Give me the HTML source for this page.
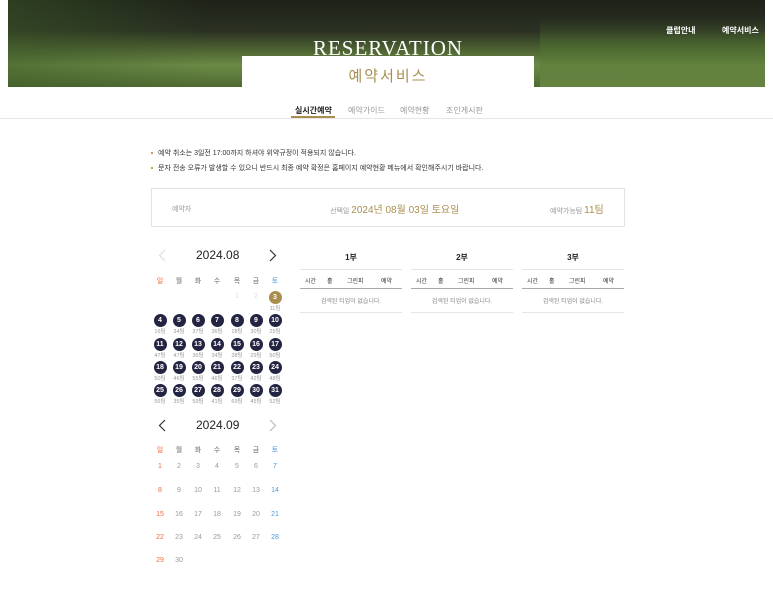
<!DOCTYPE html><html><head><meta charset="utf-8"><style>
*{margin:0;padding:0;box-sizing:border-box}
body{width:773px;height:614px;background:#fff;font-family:"Liberation Sans","Noto Sans CJK KR",sans-serif;position:relative;overflow:hidden;color:#333}
.a{position:absolute}
.ban{left:8px;top:0;width:757px;height:87px;background:linear-gradient(180deg,#1e2219 0%,#2a3022 35%,#4a5e30 55%,#6b8a45 75%,#4f6a32 100%)}
.c{position:absolute;width:13px;height:13px;border-radius:50%;background:#232342;color:#fff;font-size:7px;font-weight:bold;text-align:center;line-height:13px}
.n{position:absolute;font-size:5.5px;color:#999;width:24px;text-align:center}
.d{position:absolute;font-size:7px;color:#999;width:20px;text-align:center}
.h{position:absolute;font-size:7px;color:#666;width:20px;text-align:center}
.tb{position:absolute;width:102px;font-size:7px}
.bl{display:inline-block;width:2px;height:2px;background:#c9a24a;vertical-align:middle;margin-right:5px}
</style></head><body>
<div class="a ban"></div>
<div class="a" style="left:8px;top:0;width:200px;height:87px;background:linear-gradient(90deg,rgba(60,90,40,.5),rgba(0,0,0,0))"></div>
<div class="a" style="left:540px;top:0;width:225px;height:87px;background:linear-gradient(180deg,rgba(30,40,25,0) 20%,rgba(80,115,50,.6) 60%,rgba(110,140,70,.7))"></div>
<div class="a" style="left:242px;top:36px;width:292px;text-align:center;font-family:'Liberation Serif',serif;font-size:21px;color:#fff;letter-spacing:1px">RESERVATION</div>
<div class="a" style="left:242px;top:56px;width:292px;height:32px;background:#fff;text-align:center;font-size:15px;color:#a98f4f;line-height:42px;letter-spacing:2px">예약서비스</div>
<div class="a" style="left:666px;top:25px;font-size:8px;color:#fff;font-weight:bold">클럽안내</div>
<div class="a" style="left:722px;top:25px;font-size:8px;color:#fff;font-weight:bold">예약서비스</div>
<div class="a" style="left:0;top:118px;width:773px;height:1px;background:#e5e5e5"></div>
<div class="a" style="left:295px;top:105px;font-size:8px;color:#222;font-weight:bold">실시간예약</div>
<div class="a" style="left:291px;top:116px;width:44px;height:2px;background:#a98f4f"></div>
<div class="a" style="left:348px;top:105px;font-size:8px;color:#999">예약가이드</div>
<div class="a" style="left:400px;top:105px;font-size:8px;color:#999">예약현황</div>
<div class="a" style="left:446px;top:105px;font-size:8px;color:#999">조인게시판</div>
<div class="a" style="left:151px;top:148px;font-size:7px;color:#333"><span class="bl"></span>예약 취소는 3일전 17:00까지 하셔야 위약규정이 적용되지 않습니다.</div>
<div class="a" style="left:151px;top:163px;font-size:7px;color:#333"><span class="bl"></span>문자 전송 오류가 발생할 수 있으니 반드시 최종 예약 확정은 홈페이지 예약현황 메뉴에서 확인해주시기 바랍니다.</div>
<div class="a" style="left:151px;top:188px;width:474px;height:39px;border:1px solid #e3e3e3"></div>
<div class="a" style="left:172px;top:204px;font-size:7px;color:#999">예약자</div>
<div class="a" style="left:330px;top:201px;font-size:7px;color:#999">선택일 <span style="font-size:10px;color:#a98f4f">2024년 08월 03일 토요일</span></div>
<div class="a" style="left:550px;top:201px;font-size:7px;color:#999">예약가능팀 <span style="font-size:10px;color:#a98f4f">11팀</span></div>

<svg class="a" style="left:158px;top:249px" width="8" height="13"><path d="M7 1L1.5 6.5L7 12" fill="none" stroke="#ddd" stroke-width="1.2"/></svg>
<div class="a" style="left:196px;top:248px;font-size:12px;color:#222">2024.08</div>
<svg class="a" style="left:269px;top:249px" width="8" height="13"><path d="M1 1L6.5 6.5L1 12" fill="none" stroke="#333" stroke-width="1.2"/></svg>
<svg class="a" style="left:158px;top:419px" width="8" height="13"><path d="M7 1L1.5 6.5L7 12" fill="none" stroke="#333" stroke-width="1.2"/></svg>
<div class="a" style="left:196px;top:418px;font-size:12px;color:#222">2024.09</div>
<svg class="a" style="left:269px;top:419px" width="8" height="13"><path d="M1 1L6.5 6.5L1 12" fill="none" stroke="#bbb" stroke-width="1.2"/></svg>
<div id="cal"></div>

<div class="tb" style="left:300px;top:252px;text-align:center;font-size:8px;font-weight:bold;color:#222">1부</div>
<div class="tb" style="left:411px;top:252px;text-align:center;font-size:8px;font-weight:bold;color:#222">2부</div>
<div class="tb" style="left:522px;top:252px;text-align:center;font-size:8px;font-weight:bold;color:#222">3부</div>
<script>
var x=[160,179,198,217,237,256,275],o='';
var hd=['일','월','화','수','목','금','토'];
function heads(y){for(var i=0;i<7;i++){var c=i==0?'#f06a3a':i==6?'#4a9be0':'#666';o+='<div class="h" style="left:'+(x[i]-10)+'px;top:'+y+'px;color:'+c+'">'+hd[i]+'</div>'}}
heads(276);heads(445);
var cnt=[11,16,34,37,36,18,30,25,47,47,36,34,38,29,50,50,46,55,46,37,42,48,56,35,59,41,69,45,52];
o+='<div class="d" style="left:'+(x[4]-10)+'px;top:293px;color:#ddd">1</div><div class="d" style="left:'+(x[5]-10)+'px;top:293px;color:#ddd">2</div>';
var ry=[297,320,344,367,390];
for(var d=3;d<=31;d++){var idx=d+3,r=Math.floor(idx/7),col=idx%7,cx=x[col],cy=ry[r];
o+='<div class="c" style="left:'+(cx-6.5)+'px;top:'+(cy-6.5)+'px;'+(d==3?'background:#a98f4f':'')+'">'+d+'</div>';
o+='<div class="n" style="left:'+(cx-12)+'px;top:'+(cy+7)+'px">'+cnt[d-3]+'팀</div>'}
var sy=[467,491,515,538,561];
for(var d=1;d<=30;d++){var idx=d-1,r=Math.floor(idx/7),col=idx%7,c=col==0?'#f06a3a':col==6?'#4a9be0':'#999';
o+='<div class="d" style="left:'+(x[col]-10)+'px;top:'+(sy[r]-4)+'px;color:'+c+'">'+d+'</div>'}
var t=[300,411,522];
for(var i=0;i<3;i++){var L=t[i];
o+='<div class="a" style="left:'+L+'px;top:269px;width:102px;height:1px;background:#e5e5e5"></div>';
o+='<div class="a" style="left:'+L+'px;top:288px;width:102px;height:1px;background:#aaa"></div>';
o+='<div class="a" style="left:'+L+'px;top:312px;width:102px;height:1px;background:#e5e5e5"></div>';
o+='<div class="a" style="left:'+(L+5)+'px;top:276px;font-size:6px;color:#333">시간</div>';
o+='<div class="a" style="left:'+(L+27)+'px;top:276px;font-size:6px;color:#333">홀</div>';
o+='<div class="a" style="left:'+(L+47)+'px;top:276px;font-size:6px;color:#333">그린피</div>';
o+='<div class="a" style="left:'+(L+81)+'px;top:276px;font-size:6px;color:#333">예약</div>';
o+='<div class="a" style="left:'+L+'px;top:296px;width:102px;text-align:center;font-size:6px;color:#888">검색된 티업이 없습니다.</div>'}
document.getElementById('cal').innerHTML=o;
</script>
<div id="cal"></div>
</body></html>
